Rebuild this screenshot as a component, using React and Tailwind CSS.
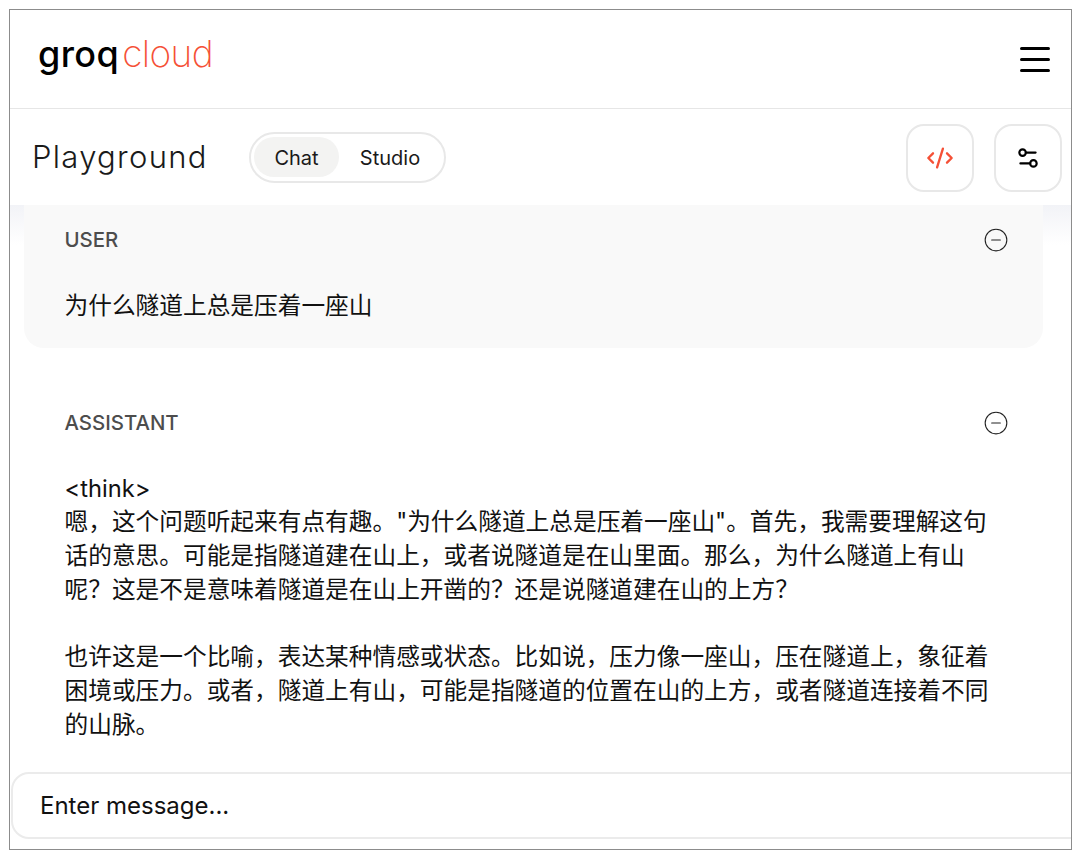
import { CodeXml, Settings2, CircleMinus } from 'lucide-react'

const sans = "font-['Inter','Noto_Sans_CJK_SC',sans-serif]"

function Message({ role, children, shaded }) {
  return (
    <div className={`ml-[14px] mr-[28px] pl-[40.5px] pr-[34px] ${shaded ? 'bg-[#f9f9f9] rounded-b-[20px] pt-[22px] pb-[25px]' : 'pt-[63px]'}`}>
      <div className="flex items-center justify-between h-[26px]">
        <span className="text-[20.4px] font-medium text-[#4d4d4d]">{role}</span>
        <CircleMinus className={`w-[26px] h-[26px] text-[#222] ${shaded ? '' : '-mt-[1px]'}`} strokeWidth={1} />
      </div>
      <div className={`${shaded ? 'mt-[36px]' : 'mt-[35px]'} text-[23.7px] leading-[33.7px] text-[#111]`}>{children}</div>
    </div>
  )
}

export default function App() {
  return (
    <div className={`h-[858px] bg-white pt-[9px] pl-[9px] ${sans}`}>
      <div className="relative w-[1063px] h-[841px] border border-[#8c8c8c] bg-white flex flex-col overflow-hidden">
        {/* Top bar */}
        <header className="h-[99px] shrink-0 border-b border-[#e6e6e6] flex items-center justify-between pl-[28px] pr-[21px]">
          <div className="flex items-baseline -mt-[12px] leading-none">
            <span className="font-medium text-[36px] tracking-[0.4px] text-black">groq</span>
            <span className="ml-[3px] font-extralight text-[37px] tracking-[-0.6px] text-[#f55036]">cloud</span>
          </div>
          <div className="flex flex-col gap-[8px] w-[30px]">
            <div className="h-[3px] bg-black rounded-full" />
            <div className="h-[3px] bg-black rounded-full" />
            <div className="h-[3px] bg-black rounded-full" />
          </div>
        </header>

        {/* Playground bar */}
        <div className="h-[96px] shrink-0 flex items-center pl-[22px] pr-[9px]">
          <h1 className="w-[217px] font-light text-[31px] tracking-[1.3px] text-[#1a1a1a]">Playground</h1>
          <div className="flex items-center h-[51px] p-[3px] rounded-full border-2 border-[#e8e8e8] text-[20px] text-[#1a1a1a]">
            <span className="h-[40px] w-[85px] pt-[1px] flex items-center justify-center rounded-full bg-[#f3f3f2]">Chat</span>
            <span className="h-[40px] w-[102px] pt-[1px] flex items-center justify-center">Studio</span>
          </div>
          <div className="ml-auto mt-[1px] flex gap-[20px]">
            <button className="w-[68px] h-[68px] rounded-[18px] border-2 border-[#e8e8e8] flex items-center justify-center">
              <CodeXml className="w-[28px] h-[28px] text-[#f55036]" strokeWidth={2} />
            </button>
            <button className="w-[68px] h-[68px] rounded-[18px] border-2 border-[#e8e8e8] flex items-center justify-center">
              <Settings2 className="w-[26px] h-[26px] text-black" strokeWidth={2} />
            </button>
          </div>
        </div>

        {/* Faint shadow behind the top of the message list */}
        <div className="relative flex-1 min-h-0 bg-gradient-to-b from-[#f2f3f7] to-white to-[40px]">
          <Message role="USER" shaded>为什么隧道上总是压着一座山</Message>
          <Message role="ASSISTANT">
            <p>&lt;think&gt;</p>
            <p>嗯，这个问题听起来有点有趣。"为什么隧道上总是压着一座山"。首先，我需要理解这句<br />话的意思。可能是指隧道建在山上，或者说隧道是在山里面。那么，为什么隧道上有山<br />呢？这是不是意味着隧道是在山上开凿的？还是说隧道建在山的上方？</p>
            <p className="mt-[33.7px]">也许这是一个比喻，表达某种情感或状态。比如说，压力像一座山，压在隧道上，象征着<br />困境或压力。或者，隧道上有山，可能是指隧道的位置在山的上方，或者隧道连接着不同<br />的山脉。</p>
          </Message>
        </div>

        {/* Message input, runs off the right edge */}
        <div className="absolute left-[1px] -right-[20px] top-[762px] h-[67px] bg-white border-2 border-[#ebebeb] rounded-[18px] flex items-center pl-[27px] text-[24px] text-[#111]">
          Enter message...
        </div>
      </div>
    </div>
  )
}
